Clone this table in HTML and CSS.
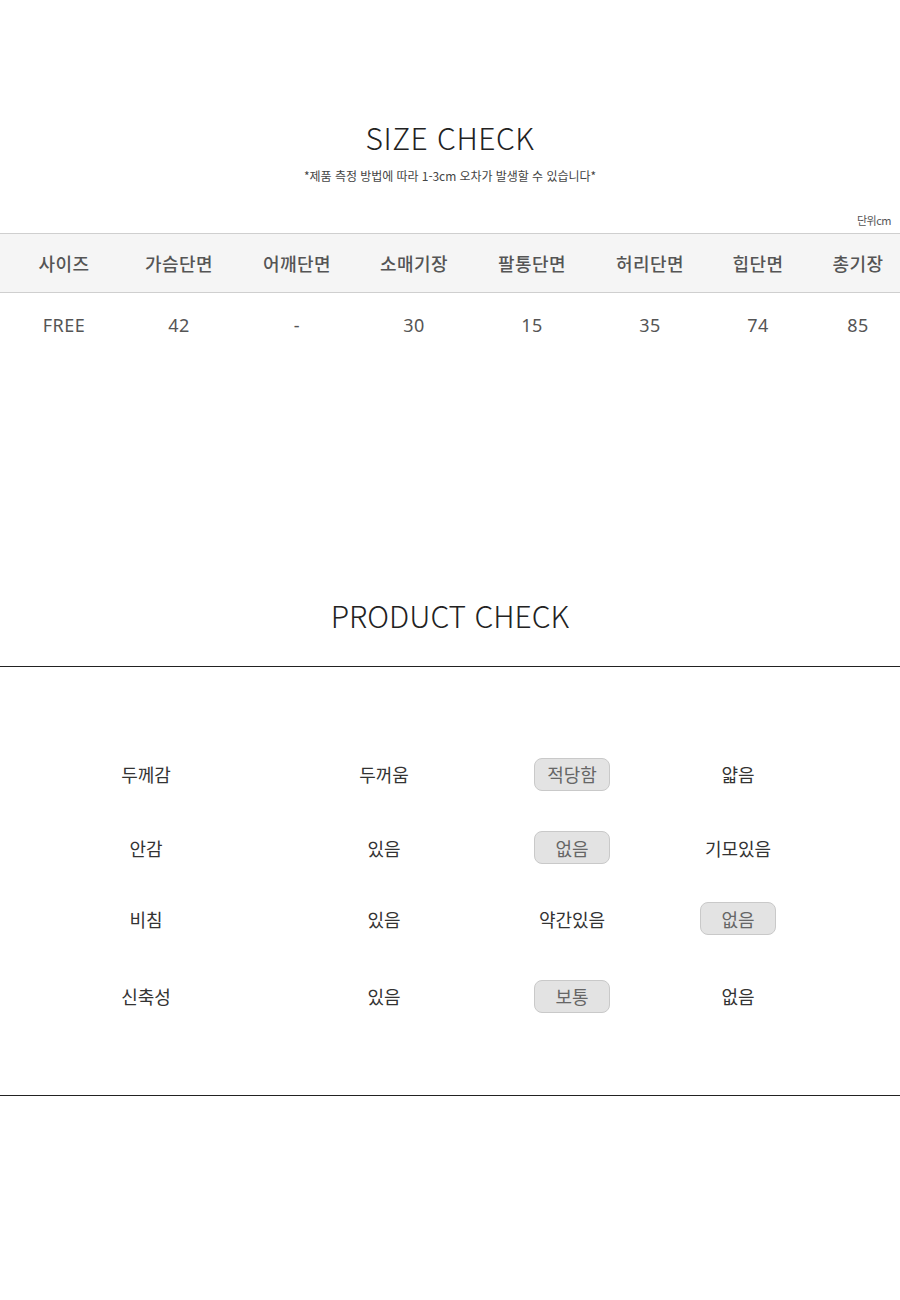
FILE: index.html
```html
<!DOCTYPE html>
<html lang="ko">
<head>
<meta charset="utf-8">
<title>Size Check</title>
<link rel="stylesheet" href="styles.css">
</head>
<body>
<section class="size-section">
  <h2 class="title">SIZE CHECK</h2>
  <p class="subtitle">*제품 측정 방법에 따라 1-3cm 오차가 발생할 수 있습니다*</p>
  <p class="unit">단위cm</p>
  <div class="size-table">
    <div class="row head">
      <div>사이즈</div><div>가슴단면</div><div>어깨단면</div><div>소매기장</div><div>팔통단면</div><div>허리단면</div><div>힙단면</div><div>총기장</div>
    </div>
    <div class="row data">
      <div>FREE</div><div>42</div><div>-</div><div>30</div><div>15</div><div>35</div><div>74</div><div>85</div>
    </div>
  </div>
</section>

<section class="product-section">
  <h2 class="title title-product">PRODUCT CHECK</h2>
  <div class="product-box">
    <div class="pgrid">
      <div class="cell">두께감</div><div class="cell">두꺼움</div><div class="cell"><span class="pill">적당함</span></div><div class="cell">얇음</div>
      <div class="cell">안감</div><div class="cell">있음</div><div class="cell"><span class="pill">없음</span></div><div class="cell">기모있음</div>
      <div class="cell">비침</div><div class="cell">있음</div><div class="cell">약간있음</div><div class="cell"><span class="pill">없음</span></div>
      <div class="cell">신축성</div><div class="cell">있음</div><div class="cell"><span class="pill">보통</span></div><div class="cell">없음</div>
    </div>
  </div>
</section>
</body>
</html>
```

FILE: styles.css
```css
html, body {
  margin: 0;
  padding: 0;
  background: #fff;
}
body {
  font-family: "Noto Sans CJK KR", "Noto Sans", sans-serif;
  color: #333;
  width: 900px;
}
.title {
  margin: 0;
  text-align: center;
  font-family: "Noto Sans CJK KR", "Noto Sans", sans-serif;
  font-weight: 300;
  font-size: 30px;
  line-height: 40px;
  color: #222;
  letter-spacing: 0.5px;
}
.size-section {
  padding-top: 117px;
}
.subtitle {
  margin: 9px 0 0;
  text-align: center;
  font-size: 12px;
  line-height: 20px;
  color: #444;
  letter-spacing: -0.05px;
}
.unit {
  margin: 26px 0 0;
  text-align: right;
  padding-right: 9px;
  font-size: 11px;
  line-height: 16px;
  color: #555;
  letter-spacing: -0.5px;
}
.size-table {
  margin-top: 5px;
}
.row {
  display: grid;
  grid-template-columns: 128px 102px 134px 100px 136px 100px 116px 84px;
  align-items: center;
  text-align: center;
}
.head {
  height: 58px;
  background: #f5f5f5;
  border-top: 1px solid #cfcfcf;
  border-bottom: 1px solid #cfcfcf;
  font-size: 18px;
  font-weight: 500;
  color: #555;
  letter-spacing: 0.5px;
}
.data {
  height: 64px;
  font-size: 18px;
  color: #555;
  font-family: "Noto Sans", "Noto Sans CJK KR", sans-serif;
  letter-spacing: 0.5px;
}
.product-section {
  padding-top: 238px;
}
.title-product {
  letter-spacing: 0;
}
.product-box {
  margin-top: 31px;
  border-top: 1px solid #222;
  border-bottom: 1px solid #222;
  padding: 69px 0 57px;
}
.pgrid {
  display: grid;
  grid-template-columns: 292px 184px 192px 140px;
  grid-template-rows: 76px 71px 71px 84px;
}
.cell {
  display: flex;
  align-items: center;
  justify-content: center;
  font-size: 18px;
  color: #333;
}
.pill {
  display: inline-flex;
  align-items: center;
  justify-content: center;
  width: 74px;
  height: 31px;
  background: #e3e3e3;
  border: 1px solid #c9c9c9;
  border-radius: 8px;
  color: #666;
}
```
